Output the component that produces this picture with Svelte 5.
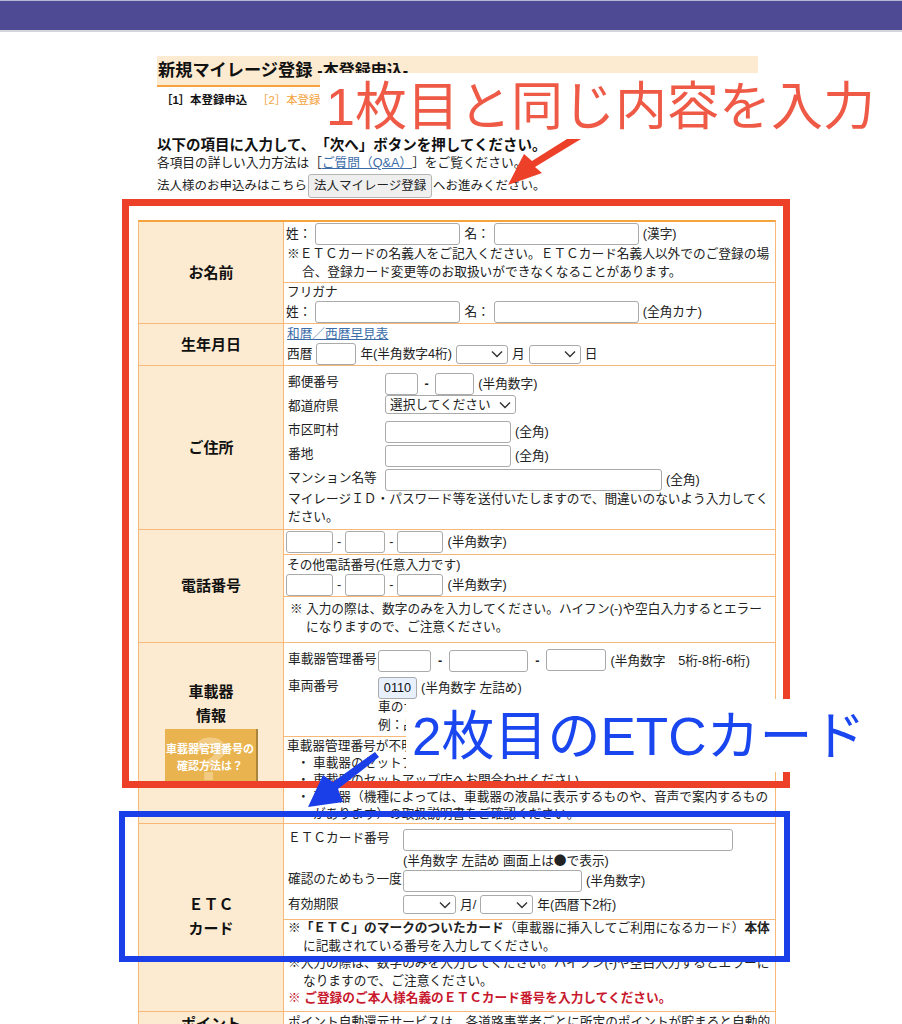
<script>
	const contact = ['車載器のセットアップ証明書をご確認ください。', '車載器のセットアップ店へお問合わせください。'];
</script>

{#snippet pick(width, label = '')}
	<span class="pick" style="width: {width}px">
		<span class="pick-label">{label}</span>
		<svg viewBox="0 0 12 8" width="12" height="8"><path d="M1 1.5 6 6.5 11 1.5" fill="none" stroke="#333" stroke-width="1.4" /></svg>
	</span>
{/snippet}

{#snippet box(width, value = '')}
	<input class="box" class:filled={value} style="width: {width}px" {value} />
{/snippet}

{#snippet phone()}
	<div class="inline phone">
		{@render box(47)}<span>-</span>{@render box(40)}<span>-</span>{@render box(46)}<span>(半角数字)</span>
	</div>
{/snippet}

<header class="topbar"></header>

<main class="page">
	<h1 class="title"><span class="title-main">新規マイレージ登録</span><span class="title-sub">-本登録申込-</span></h1>
	<div class="steps">
		<b>［1］本登録申込</b>
		<span class="step-next">［2］本登録内容確認</span>
	</div>

	<p class="lead">以下の項目に入力して、「次へ」ボタンを押してください。</p>
	<p class="intro">各項目の詳しい入力方法は［<a href="#qa">ご質問（Q&amp;A）</a>］をご覧ください。</p>
	<p class="intro corp">法人様のお申込みはこちら<button class="corp-btn">法人マイレージ登録</button>へお進みください。</p>

	<div class="table">
		<section class="row">
			<div class="head">お名前</div>
			<div class="body">
				<div class="cell name-cell">
					<div class="inline">
						<span>姓：</span>{@render box(145)}<span>名：</span>{@render box(145)}<span>(漢字)</span>
					</div>
					<p class="note hang">※ＥＴＣカードの名義人をご記入ください。ＥＴＣカード名義人以外でのご登録の場合、登録カード変更等のお取扱いができなくなることがあります。</p>
				</div>
				<div class="cell">
					<div class="name-cap">フリガナ</div>
					<div class="inline name-row">
						<span>姓：</span>{@render box(145)}<span>名：</span>{@render box(145)}<span>(全角カナ)</span>
					</div>
				</div>
			</div>
		</section>

		<section class="row">
			<div class="head">生年月日</div>
			<div class="body">
				<div class="cell">
					<a href="#wareki">和暦／西暦早見表</a>
					<div class="inline">
						<span>西暦</span>{@render box(40)}<span>年(半角数字4桁)</span>{@render pick(52)}<span>月</span>{@render pick(52)}<span>日</span>
					</div>
				</div>
			</div>
		</section>

		<section class="row">
			<div class="head">ご住所</div>
			<div class="body">
				<div class="cell address">
					<div class="form-row">
						<span>郵便番号</span>
						<div class="inline">{@render box(33)}<b class="dash">-</b>{@render box(39)}<span>(半角数字)</span></div>
					</div>
					<div class="form-row">
						<span>都道府県</span>
						<div class="inline">{@render pick(131, '選択してください')}</div>
					</div>
					<div class="form-row">
						<span>市区町村</span>
						<div class="inline">{@render box(126)}<span>(全角)</span></div>
					</div>
					<div class="form-row">
						<span>番地</span>
						<div class="inline">{@render box(126)}<span>(全角)</span></div>
					</div>
					<div class="form-row">
						<span>マンション名等</span>
						<div class="inline">{@render box(277)}<span>(全角)</span></div>
					</div>
					<p class="note">マイレージＩＤ・パスワード等を送付いたしますので、間違いのないよう入力してください。</p>
				</div>
			</div>
		</section>

		<section class="row">
			<div class="head">電話番号</div>
			<div class="body">
				<div class="cell phone-top">{@render phone()}</div>
				<div class="cell">
					<div>その他電話番号(任意入力です)</div>
					{@render phone()}
				</div>
				<div class="cell phone-note">
					<span>※</span>
					<p class="note">入力の際は、数字のみを入力してください。ハイフン(-)や空白入力するとエラーになりますので、ご注意ください。</p>
				</div>
			</div>
		</section>

		<section class="row">
			<div class="head device-head">
				<div>車載器</div>
				<div>情報</div>
				<div class="help">
					<span class="help-mark">?</span>
					<span class="help-text">車載器管理番号の<br />確認方法は？</span>
				</div>
			</div>
			<div class="body">
				<div class="cell device">
					<div class="device-row">
						<span>車載器管理番号</span>
						<div class="inline">
							{@render box(53)}<b class="dash">-</b>{@render box(79)}<b class="dash">-</b><span class="raised">{@render box(60)}</span><span>(半角数字　5桁-8桁-6桁)</span>
						</div>
					</div>
					<div class="device-row">
						<span>車両番号</span>
						<div class="inline">{@render box(39, '0110')}<span>(半角数字 左詰め)</span></div>
					</div>
					<div class="device-row plate-row">
						<span></span>
						<div>車のナンバープレートの番号<br />例：品川 500 あ 0110</div>
					</div>
				</div>
				<div class="cell device-help">
					<div>車載器管理番号が不明な場合は、以下の方法でご確認ください。</div>
					<ul class="dots">
						{#each contact as line}
							<li>{line}</li>
						{/each}
						<li>車載器（機種によっては、車載器の液晶に表示するものや、音声で案内するものがあります）の取扱説明書をご確認ください。</li>
					</ul>
				</div>
			</div>
		</section>

		<section class="row">
			<div class="head">ＥＴＣ<br />カード</div>
			<div class="body">
				<div class="cell card-form">
					<div class="card-row">
						<span>ＥＴＣカード番号</span>
						<div>
							<div class="inline">{@render box(330)}</div>
							<div>(半角数字 左詰め 画面上は<span class="blob">●</span>で表示)</div>
						</div>
					</div>
					<div class="card-row confirm">
						<span>確認のためもう一度</span>
						<div class="inline">{@render box(179)}<span>(半角数字)</span></div>
					</div>
					<div class="card-row">
						<span>有効期限</span>
						<div class="inline">{@render pick(53)}<span>月/</span>{@render pick(53)}<span>年(西暦下2桁)</span></div>
					</div>
				</div>
				<div class="cell card-note">
					<p class="note hang">※<b>「ＥＴＣ」のマークのついたカード</b>（車載器に挿入してご利用になるカード）<b>本体</b>に記載されている番号を入力してください。</p>
					<p class="note hang">※入力の際は、数字のみを入力してください。ハイフン(-)や空白入力するとエラーになりますので、ご注意ください。</p>
					<p class="note alert">※ <b>ご登録のご本人様名義のＥＴＣカード番号を入力してください。</b></p>
				</div>
			</div>
		</section>

		<section class="row">
			<div class="head points-head">ポイント</div>
			<div class="body">
				<div class="cell points">ポイント自動還元サービスは、各道路事業者ごとに所定のポイントが貯まると自動的に還元されるサービスです。</div>
			</div>
		</section>
	</div>
</main>

<!-- annotations pasted over the screenshot -->
<div class="notes">
	<div class="frame frame-red"></div>
	<div class="frame frame-blue"></div>
	<div class="caption caption-red">1枚目と同じ内容を入力</div>
	<div class="caption caption-blue">2枚目のETCカード</div>
	<svg class="arrows" viewBox="0 0 902 1024" width="902" height="1024">
		<path d="M567 139 581 139 535 167 542 173 508 185 524 154 532 161Z" fill="#ec4028" />
		<path d="M375 752 379 757 338 789 343 802 308 807 323 775 333 782Z" fill="#1a3fe8" />
	</svg>
</div>

<style>
	:global(html),
	:global(body) {
		height: 1024px;
		overflow: hidden;
	}

	:global(body) {
		background: #fff;
		color: #222;
		font-family: 'Liberation Sans', 'Noto Sans CJK JP', sans-serif;
		font-size: 12.7px;
		line-height: 18px;
		text-spacing-trim: space-all;
	}

	p,
	h1,
	ul {
		margin: 0;
		padding: 0;
	}

	a {
		color: #3b6ca8;
	}

	.topbar {
		height: 29px;
		background: #4e4a94;
		border-top: 1px solid #b9b7d6;
		border-bottom: 2px solid #d4d4dc;
	}

	.page {
		width: 620px;
		margin-left: 157px;
		padding-top: 24px;
	}

	.title {
		display: flex;
		align-items: baseline;
		width: 601px;
		height: 31px;
		padding-left: 1px;
		box-sizing: border-box;
		background: #fcebd0;
		border-bottom: 2px solid #f5a33c;
		font-size: 17.2px;
		line-height: 29px;
		color: #111;
	}

	.title-sub {
		margin-left: 5px;
		font-size: 16px;
	}

	.steps {
		display: flex;
		gap: 10px;
		padding: 3px 0 0 4px;
		font-size: 11.4px;
		line-height: 20px;
		color: #111;
	}

	.step-next {
		color: #f5a33c;
	}

	.lead {
		margin-top: 26px;
		font-size: 14.5px;
		font-weight: bold;
		color: #111;
	}

	.corp {
		display: flex;
		align-items: center;
		margin-top: 2px;
		font-size: 12.5px;
	}

	.corp-btn {
		width: 124px;
		height: 24px;
		margin: 0 1px;
		padding: 0;
		border: 1px solid #b5b5b5;
		border-radius: 3px;
		background: #efefef;
		color: #222;
		font: inherit;
	}

	.table {
		box-sizing: border-box;
		width: 638px;
		margin: 22px 0 0 -19px;
		border-top: 2px solid #f5a33c;
		border-left: 1px solid #f7b878;
		border-right: 1px solid #f7b878;
	}

	.row {
		display: grid;
		grid-template-columns: 145px 1fr;
		border-bottom: 1px solid #f7b878;
	}

	.head {
		display: flex;
		flex-direction: column;
		align-items: center;
		justify-content: center;
		background: #fcebd0;
		border-right: 1px solid #f7b878;
		font-size: 15px;
		font-weight: bold;
		line-height: 24px;
		text-align: center;
		color: #111;
	}

	.cell {
		padding: 1px 2px 0 3px;
	}

	.cell + .cell {
		border-top: 1px solid #f7b878;
	}

	.name-cell {
		padding-bottom: 1px;
	}

	.name-cell .inline,
	.name-row {
		margin-left: -1px;
	}

	.name-cap {
		line-height: 17px;
	}

	.inline {
		display: flex;
		align-items: center;
		gap: 4px;
		white-space: nowrap;
	}

	.phone {
		margin-left: -1px;
	}

	.phone-top {
		padding-bottom: 1px;
	}

	.box {
		height: 22px;
		padding: 0 2px;
		box-sizing: border-box;
		border: 1px solid #aaa;
		border-radius: 3px;
		background: #fff;
		font: inherit;
		color: #111;
	}

	.box.filled {
		background: #e8f0fe;
		text-align: center;
	}

	.pick {
		display: inline-flex;
		align-items: center;
		justify-content: space-between;
		height: 19px;
		padding: 0 4px;
		box-sizing: border-box;
		border: 1px solid #aaa;
		border-radius: 3px;
		background: #fff;
	}

	.pick-label {
		white-space: nowrap;
	}

	.dash {
		margin: 0 2.5px;
	}

	.hang {
		padding-left: 15px;
		text-indent: -15px;
	}

	.address {
		padding: 7px 4px 3px;
	}

	.address .note {
		margin-top: -2px;
		line-height: 17.5px;
	}

	.form-row {
		display: grid;
		grid-template-columns: 97px 1fr;
		align-items: start;
		height: 22px;
		margin-bottom: 2px;
	}

	.form-row .pick {
		margin-top: -2px;
	}

	.phone-note {
		display: grid;
		grid-template-columns: 16px 1fr;
		padding: 3px 12px 6px 6px;
	}

	.device {
		padding: 7px 4px 2px;
	}

	.device .dash {
		margin: 0 3px;
	}

	.device-head {
		justify-content: flex-start;
		padding-top: 37px;
	}

	.device-row {
		display: grid;
		grid-template-columns: 90px 1fr;
	}

	.device-row + .device-row {
		margin-top: 5px;
	}

	.device-row.plate-row {
		margin-top: -1px;
	}

	.raised {
		display: flex;
		margin-top: -3px;
	}

	.help {
		position: relative;
		flex: none;
		width: 93px;
		height: 58px;
		margin-top: 1px;
		overflow: hidden;
		background: #e9b44f;
		border-right: 2px solid #a8853a;
		box-sizing: border-box;
	}

	.help-mark {
		position: absolute;
		inset: 0;
		font-size: 62px;
		line-height: 60px;
		color: #f2cc85;
	}

	.help-text {
		position: relative;
		display: block;
		padding-top: 12px;
		font-size: 11px;
		line-height: 17px;
		color: #fff;
	}

	.device-help {
		padding: 1px 3px 0;
		line-height: 17px;
	}

	.dots {
		list-style: none;
		padding-left: 26px;
	}

	.dots li {
		position: relative;
	}

	.dots li::before {
		content: '・';
		position: absolute;
		left: -16px;
	}

	.card-form {
		padding: 5px 4px 5px;
	}

	.card-row {
		display: grid;
		grid-template-columns: 115px 1fr;
		align-items: start;
	}

	.card-row.confirm {
		margin-bottom: 3px;
	}

	.blob {
		font-family: 'Noto Sans CJK JP', sans-serif;
	}

	.card-note {
		padding: 0 3px 3px 4px;
		line-height: 17.6px;
	}

	.alert {
		color: #c8192e;
	}

	.points-head {
		justify-content: flex-start;
	}

	.points {
		padding: 1px 3px 1px 4px;
		height: 40px;
	}

	.notes {
		position: absolute;
		inset: 0 0 auto 0;
		height: 1024px;
		pointer-events: none;
	}

	.caption {
		position: absolute;
		right: 0;
		background: #fff;
		white-space: nowrap;
		font-family: 'Liberation Sans', 'Noto Sans CJK JP', sans-serif;
	}

	.caption-red {
		top: 73px;
		left: 320px;
		height: 64px;
		padding-left: 6px;
		font-size: 52px;
		line-height: 68px;
		color: #ef5a47;
	}

	.caption-blue {
		top: 699px;
		left: 406px;
		height: 73px;
		padding-left: 6px;
		font-size: 53px;
		line-height: 76px;
		color: #1a46f0;
	}

	.frame {
		position: absolute;
		box-sizing: border-box;
	}

	.frame-red {
		left: 122px;
		top: 199px;
		width: 668px;
		height: 589px;
		border: 7px solid #ec4028;
	}

	.frame-blue {
		left: 119px;
		top: 811px;
		width: 671px;
		height: 151px;
		border: 6px solid #1a3fe8;
	}

	.arrows {
		position: absolute;
		left: 0;
		top: 0;
	}
</style>
